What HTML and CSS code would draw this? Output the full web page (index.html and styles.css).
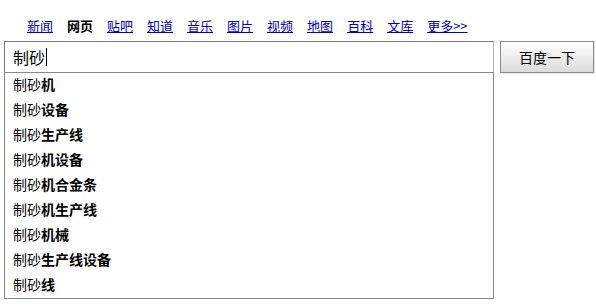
FILE: index.html
```html
<!DOCTYPE html>
<html lang="zh-CN">
<head>
<meta charset="UTF-8">
<title>百度一下</title>
<link rel="stylesheet" href="styles.css">
</head>
<body>
<div id="wrap">
  <div id="nav">
    <a href="#">新闻</a>
    <b>网页</b>
    <a href="#">贴吧</a>
    <a href="#">知道</a>
    <a href="#">音乐</a>
    <a href="#">图片</a>
    <a href="#">视频</a>
    <a href="#">地图</a>
    <a href="#">百科</a>
    <a href="#">文库</a>
    <a href="#">更多&gt;&gt;</a>
  </div>
  <div id="search">
    <div id="field">
      <div id="kw">制砂<span class="caret"></span></div>
      <div id="sug">
        <div class="item">制砂<b>机</b></div>
        <div class="item">制砂<b>设备</b></div>
        <div class="item">制砂<b>生产线</b></div>
        <div class="item">制砂<b>机设备</b></div>
        <div class="item">制砂<b>机合金条</b></div>
        <div class="item">制砂<b>机生产线</b></div>
        <div class="item">制砂<b>机械</b></div>
        <div class="item">制砂<b>生产线设备</b></div>
        <div class="item">制砂<b>线</b></div>
      </div>
    </div>
    <button id="su">百度一下</button>
  </div>
</div>
</body>
</html>
```

FILE: styles.css
```css
body {
  margin: 0;
  background: #fff;
  font-family: "Noto Sans CJK SC", "Liberation Sans", sans-serif;
  color: #000;
}
#wrap {
  padding: 18px 0 0 4px;
}
#nav {
  display: flex;
  gap: 14px;
  padding-left: 23px;
  height: 16px;
  font-size: 13px;
  line-height: 16px;
}
#nav a {
  color: #0000cc;
  text-decoration: underline;
}
#nav b {
  font-weight: bold;
}
#search {
  display: flex;
  align-items: flex-start;
  gap: 6px;
  margin-top: 7px;
}
#field {
  display: flex;
  flex-direction: column;
  width: 490px;
}
#kw {
  box-sizing: border-box;
  height: 32px;
  border: 1px solid;
  border-color: #7b7b7b #b8b8b8 #b8b8b8 #7b7b7b;
  padding: 0 0 0 8px;
  font-size: 16px;
  line-height: 30px;
  display: flex;
  align-items: center;
}
.caret {
  display: inline-block;
  width: 1px;
  height: 18px;
  background: #000;
  margin-left: 1px;
}
#sug {
  margin-top: -1px;
  width: 488px;
  background: #fff;
  border: 1px solid #888;
}
.item {
  height: 23px;
  line-height: 23px;
  padding: 0 0 2px 8px;
  font-size: 14px;
}
.item b {
  font-weight: bold;
}
#su {
  width: 94px;
  height: 32px;
  padding: 0;
  font-family: "Noto Sans CJK SC", sans-serif;
  font-size: 14px;
  color: #000;
  border: 1px solid #8c8c8c;
  border-radius: 0;
  background: linear-gradient(to bottom, #ffffff, #dcdcdc);
  box-shadow: 1px 1px 0 #e8e8e8;
  cursor: pointer;
}
```
